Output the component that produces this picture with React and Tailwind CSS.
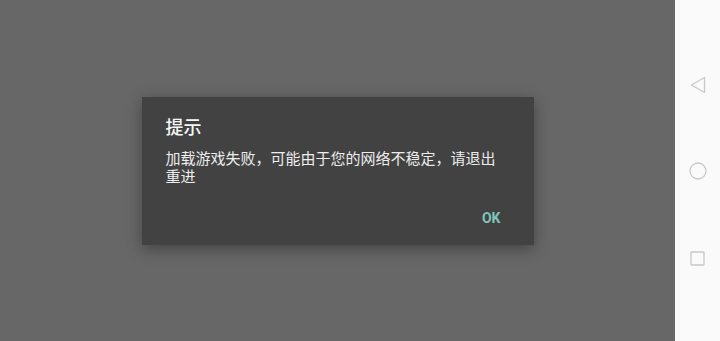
export default function App() {
  return (
    <div className="flex h-[341px] w-[720px] overflow-hidden" style={{ fontFamily: '"Noto Sans CJK SC", "Noto Sans", sans-serif' }}>
      <div className="flex flex-1 items-center justify-center bg-[#676767]">
        <div className="w-[392px] bg-[#424242] shadow-[0_4px_14px_rgba(0,0,0,0.35)] pl-[24px] pr-[24px] pt-[17px] pb-[19px]">
          <div className="text-[18px] leading-[24px] font-medium text-[#f7f7f7]">提示</div>
          <div className="mt-[11px] text-[15px] leading-[18px] text-[#ededed]">
            加载游戏失败，可能由于您的网络不稳定，请退出重进
          </div>
          <div className="mt-[25px] flex justify-end pr-[9px]">
            <span className="text-[14px] leading-[16px] font-bold text-[#7fc6bd]" style={{ fontFamily: 'Roboto, "Noto Sans", sans-serif' }}>OK</span>
          </div>
        </div>
      </div>
      <div className="flex w-[45px] flex-col items-center bg-[#fafafa]">
        <svg className="mt-[76px]" width="16" height="18" viewBox="0 0 16 18" fill="none" stroke="#c8c8c8" strokeWidth="1.3" strokeLinejoin="round">
          <path d="M14.5 1.5 L1.5 9 L14.5 16.5 Z" />
        </svg>
        <svg className="mt-[68px]" width="18" height="18" viewBox="0 0 18 18" fill="none" stroke="#c8c8c8" strokeWidth="1.3">
          <circle cx="9" cy="9" r="8" />
        </svg>
        <svg className="mt-[71px]" width="15" height="15" viewBox="0 0 15 15" fill="none" stroke="#c8c8c8" strokeWidth="1.3">
          <rect x="1" y="1" width="13" height="13" rx="0.5" />
        </svg>
      </div>
    </div>
  );
}
